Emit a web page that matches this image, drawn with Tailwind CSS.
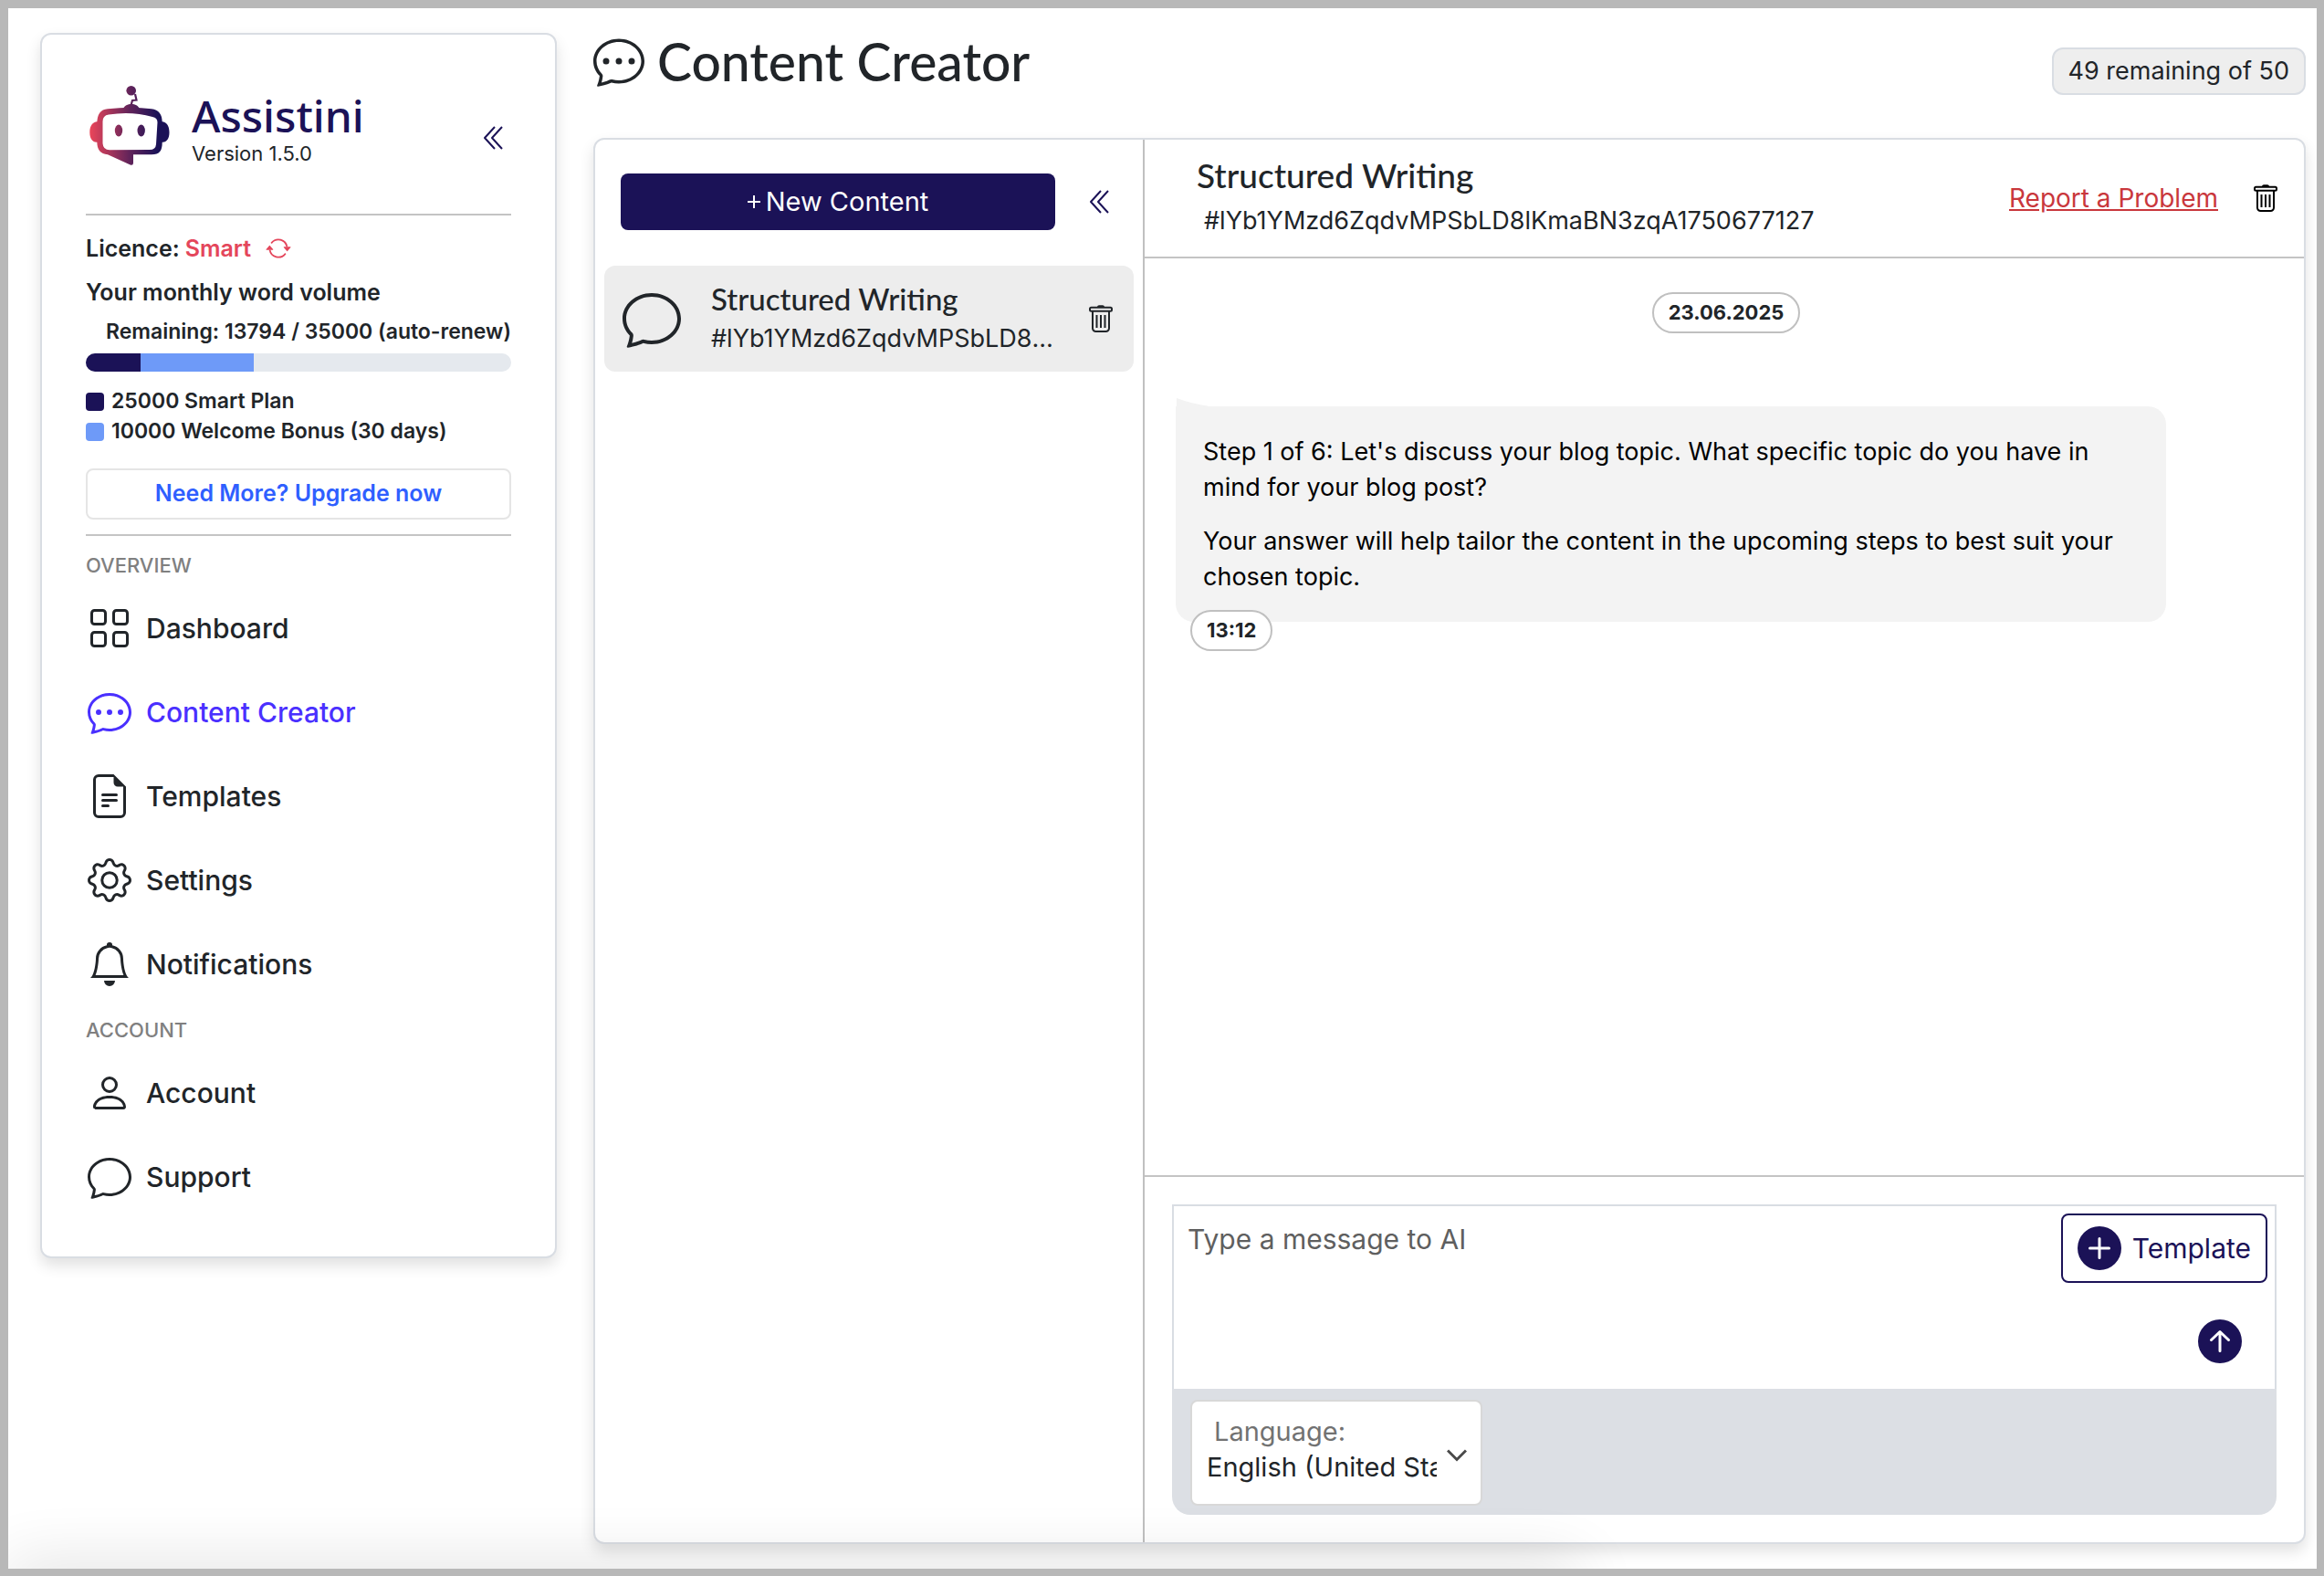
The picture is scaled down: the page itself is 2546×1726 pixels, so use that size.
<!DOCTYPE html>
<html lang="en">
<head>
  <meta charset="UTF-8" />
  <meta name="viewport" content="width=device-width, initial-scale=1.0" />
  <title>Assistini - Content Creator</title>
  <!-- Tailwind CSS CDN -->
  <script src="https://cdn.jsdelivr.net/npm/@tailwindcss/browser@4"></script>
</head>
<body class="relative min-h-screen flex items-stretch overflow-hidden border-t-9 border-l-9 border-r-8 border-b-8 border-[#b8b8b8] bg-white pt-[27px] pr-3 pb-[27px] pl-[35px] gap-10 font-['Inter',sans-serif] text-[#212529]">

  <!-- Shared icons -->
  <svg class="hidden" xmlns="http://www.w3.org/2000/svg">
    <symbol id="i-chat" viewBox="0 0 16 16">
      <path d="M2.678 11.894a1 1 0 0 1 .287.801 11 11 0 0 1-.398 2c1.395-.323 2.247-.697 2.634-.893a1 1 0 0 1 .71-.074A8 8 0 0 0 8 14c3.996 0 7-2.807 7-6s-3.004-6-7-6-7 2.808-7 6c0 1.468.617 2.83 1.678 3.894m-.493 3.905a22 22 0 0 1-.713.129c-.2.032-.352-.176-.273-.362a10 10 0 0 0 .244-.637l.003-.01c.248-.72.45-1.548.524-2.319C.743 11.37 0 9.76 0 8c0-3.866 3.582-7 8-7s8 3.134 8 7-3.582 7-8 7a9 9 0 0 1-2.347-.306c-.52.263-1.639.742-3.468 1.105" />
    </symbol>
    <symbol id="i-chat-dots" viewBox="0 0 16 16">
      <use href="#i-chat" />
      <path d="M5 8a1 1 0 1 1-2 0 1 1 0 0 1 2 0m4 0a1 1 0 1 1-2 0 1 1 0 0 1 2 0m3 1a1 1 0 1 0 0-2 1 1 0 0 0 0 2" />
    </symbol>
    <symbol id="i-collapse" viewBox="0 0 22 26">
      <path d="M13 1 2 13l11 12M21 1 10 13l11 12" fill="none" stroke="currentColor" stroke-width="2" stroke-linejoin="round" />
    </symbol>
    <symbol id="i-trash" viewBox="0 0 26 30">
      <path d="M9 2.5C9 1 10 .3 11 .3h4c1 0 2 .7 2 2.2z" />
      <rect x="1" y="2.8" width="24" height="4" rx="1.5" fill="none" stroke="currentColor" stroke-width="2" />
      <path d="M4 7v18.500a3.500 3.500 0 0 0 3.500 3.500h11a3.500 3.500 0 0 0 3.500-3.500V7M8.500 11v14M13 11v14M17.500 11v14" fill="none" stroke="currentColor" stroke-width="2" />
    </symbol>
  </svg>

  <!-- Sidebar -->
  <aside class="relative z-10 w-[566px] shrink-0 self-start rounded-xl border-2 border-[#d9dde3] bg-white px-12 pb-[41px] shadow-[0_8px_16px_rgba(0,0,0,0.12)]">
    <div class="flex items-end pt-14 pb-[52px] pl-1 pr-[9px]">
      <svg class="size-[88px] shrink-0" viewBox="0 0 88 88">
        <defs>
          <linearGradient id="robot" gradientUnits="userSpaceOnUse" x1="0" y1="0" x2="88" y2="0">
            <stop offset="0" stop-color="#ec465a" />
            <stop offset="0.5" stop-color="#61235a" />
            <stop offset="0.85" stop-color="#1b1257" />
            <stop offset="1" stop-color="#1b1257" />
          </linearGradient>
        </defs>
        <g fill="url(#robot)">
          <circle cx="45.700" cy="5.300" r="5.300" />
          <path d="M50 9 51.500 15.500 47 16 45.500 21.500" fill="none" stroke="url(#robot)" stroke-width="2.200" />
          <path d="M37 25.500C38 21.500 42 20 46 20s7.500 1.500 9 5.500z" />
          <path d="M10 39C4 39 .3 43 .3 51S4 62 10 62zM78 39c6 0 9.500 4 9.500 12S84 62 78 62z" />
          <path fill-rule="evenodd" d="M8.300 42C8.300 31 12 26 20 25.300Q46 22 68 25.300C76 26.500 79.700 31 79.700 40V62C79.700 71 77 75.300 68 75.300H48V84.500Q48 87.500 44.700 86.500L20 75.300C12 74.500 8.300 70 8.300 61zM14.500 39V63Q15 70.300 22 70.300L66 70Q72.500 70 73 64L74.500 40Q74.500 35 69 34Q46 27.500 21 31.500Q14.500 32.500 14.500 39" />
          <ellipse cx="32" cy="49" rx="4.200" ry="6.500" />
          <ellipse cx="56.700" cy="49" rx="4.200" ry="6.500" />
        </g>
      </svg>
      <div class="ml-6 flex-1">
        <div class="font-['Noto_Sans',sans-serif] text-[48px] leading-[56px] font-medium text-[#1b1257]">Assistini</div>
        <div class="text-[22px] leading-[27px]">Version 1.5.0</div>
      </div>
      <button type="button" aria-label="Collapse sidebar" class="mb-[18px] text-[#1b1257]">
        <svg class="h-[26px] w-[22px]"><use href="#i-collapse" /></svg>
      </button>
    </div>

    <div class="border-t-2 border-[#c4c4c4] pt-3">
      <div class="flex items-center text-[25px] leading-[48px] font-semibold">
        Licence:<span class="ml-[6px] text-[#e4465b]">Smart</span>
        <button type="button" aria-label="Refresh licence" class="ml-4 text-[#e4465b]">
          <svg class="size-7" viewBox="0 0 16 16" fill="currentColor">
            <path d="M11.534 7h3.932a.25.25 0 0 1 .192.41l-1.966 2.36a.25.25 0 0 1-.384 0l-1.966-2.36a.25.25 0 0 1 .192-.41m-11 2h3.932a.25.25 0 0 0 .192-.41L2.692 6.230a.25.25 0 0 0-.384 0L.342 8.590A.25.25 0 0 0 .534 9" />
            <path d="M8 3c-1.552 0-2.940.707-3.857 1.818a.5.5 0 1 1-.771-.636A6.002 6.002 0 0 1 13.917 7H12.900A5 5 0 0 0 8 3M3.100 9a5.002 5.002 0 0 0 8.757 2.182.5.5 0 1 1 .771.636A6.002 6.002 0 0 1 2.083 9z" />
          </svg>
        </button>
      </div>
      <div class="text-[25px] leading-[48px] font-semibold">Your monthly word volume</div>
      <div class="text-right text-[23px] leading-[38px] font-semibold whitespace-nowrap">Remaining: 13794 / 35000 (auto-renew)</div>
      <div class="mt-[5px] flex h-5 overflow-hidden rounded-full bg-[#e5e9ee]">
        <div class="bg-[#1b1257]" style="width: 12.9%"></div>
        <div class="bg-[#6e9af8]" style="width: 26.6%"></div>
      </div>
      <ul class="mt-4 text-[23px] leading-[33px] font-semibold">
        <li class="flex items-center gap-2"><span class="size-5 rounded-sm bg-[#1b1257]"></span>25000 Smart Plan</li>
        <li class="flex items-center gap-2"><span class="size-5 rounded-sm bg-[#6e9af8]"></span>10000 Welcome Bonus (30 days)</li>
      </ul>
      <button type="button" class="mt-6 h-14 w-full rounded-lg border-2 border-[#e5e5e5] text-[25px] font-semibold text-[#2f5fff]">Need More? Upgrade now</button>
    </div>

    <nav class="mt-4 border-t-2 border-[#c4c4c4] text-[30px] font-medium">
      <h2 class="mt-4 mb-[7px] text-[22px] leading-8 text-[#808080]">OVERVIEW</h2>
      <a href="#" class="flex h-[92px] items-center gap-4 pl-[2px]">
        <svg class="size-12" viewBox="0 0 16 16" fill="none" stroke="currentColor">
          <rect x="1.500" y="1.500" width="5" height="5" rx="1" />
          <rect x="9.500" y="1.500" width="5" height="5" rx="1" />
          <rect x="1.500" y="9.500" width="5" height="5" rx="1" />
          <rect x="9.500" y="9.500" width="5" height="5" rx="1" />
        </svg>
        Dashboard
      </a>
      <a href="#" class="flex h-[92px] items-center gap-4 pl-[2px] text-[#4a30ff]">
        <svg class="size-12" fill="currentColor"><use href="#i-chat-dots" /></svg>
        Content Creator
      </a>
      <a href="#" class="flex h-[92px] items-center gap-4 pl-[2px]">
        <svg class="size-12" viewBox="0 0 16 16" fill="currentColor">
          <path d="M5.500 7a.5.5 0 0 0 0 1h5a.5.5 0 0 0 0-1zM5 9.500a.5.5 0 0 1 .5-.5h5a.5.5 0 0 1 0 1h-5a.5.5 0 0 1-.5-.5m0 2a.5.5 0 0 1 .5-.5h2a.5.5 0 0 1 0 1h-2a.5.5 0 0 1-.5-.5" />
          <path d="M9.500 0H4a2 2 0 0 0-2 2v12a2 2 0 0 0 2 2h8a2 2 0 0 0 2-2V4.500zm0 1v2A1.500 1.500 0 0 0 11 4.500h2V14a1 1 0 0 1-1 1H4a1 1 0 0 1-1-1V2a1 1 0 0 1 1-1z" />
        </svg>
        Templates
      </a>
      <a href="#" class="flex h-[92px] items-center gap-4 pl-[2px]">
        <svg class="size-12" viewBox="0 0 16 16" fill="currentColor">
          <path d="M8 4.754a3.246 3.246 0 1 0 0 6.492 3.246 3.246 0 0 0 0-6.492M5.754 8a2.246 2.246 0 1 1 4.492 0 2.246 2.246 0 0 1-4.492 0" />
          <path d="M9.796 1.343c-.527-1.790-3.065-1.790-3.592 0l-.094.319a.873.873 0 0 1-1.255.520l-.292-.160c-1.640-.892-3.433.902-2.540 2.541l.159.292a.873.873 0 0 1-.520 1.255l-.319.094c-1.790.527-1.790 3.065 0 3.592l.319.094a.873.873 0 0 1 .520 1.255l-.160.292c-.892 1.640.901 3.434 2.541 2.540l.292-.159a.873.873 0 0 1 1.255.520l.094.319c.527 1.790 3.065 1.790 3.592 0l.094-.319a.873.873 0 0 1 1.255-.520l.292.160c1.640.893 3.434-.902 2.540-2.541l-.159-.292a.873.873 0 0 1 .520-1.255l.319-.094c1.790-.527 1.790-3.065 0-3.592l-.319-.094a.873.873 0 0 1-.520-1.255l.160-.292c.893-1.640-.902-3.433-2.541-2.540l-.292.159a.873.873 0 0 1-1.255-.520zm-2.633.283c.246-.835 1.428-.835 1.674 0l.094.319a1.873 1.873 0 0 0 2.693 1.115l.291-.160c.764-.415 1.600.420 1.184 1.185l-.159.292a1.873 1.873 0 0 0 1.116 2.692l.318.094c.835.246.835 1.428 0 1.674l-.319.094a1.873 1.873 0 0 0-1.115 2.693l.160.291c.415.764-.420 1.600-1.185 1.184l-.291-.159a1.873 1.873 0 0 0-2.693 1.116l-.094.318c-.246.835-1.428.835-1.674 0l-.094-.319a1.873 1.873 0 0 0-2.692-1.115l-.292.160c-.764.415-1.600-.420-1.184-1.185l.159-.291A1.873 1.873 0 0 0 1.945 8.930l-.319-.094c-.835-.246-.835-1.428 0-1.674l.319-.094A1.873 1.873 0 0 0 3.060 4.377l-.160-.292c-.415-.764.420-1.600 1.185-1.184l.292.159a1.873 1.873 0 0 0 2.692-1.115z" />
        </svg>
        Settings
      </a>
      <a href="#" class="flex h-[92px] items-center gap-4 pl-[2px]">
        <svg class="size-12" viewBox="0 0 16 16" fill="currentColor">
          <path d="M8 16a2 2 0 0 0 2-2H6a2 2 0 0 0 2 2M8 1.918l-.797.161A4 4 0 0 0 4 6c0 .628-.134 2.197-.459 3.742-.160.767-.376 1.566-.663 2.258h10.244c-.287-.692-.502-1.490-.663-2.258C12.134 8.197 12 6.628 12 6a4 4 0 0 0-3.203-3.920zM14.220 12c.223.447.481.801.780 1H1c.299-.199.557-.553.780-1C2.680 10.200 3 6.880 3 6c0-2.420 1.720-4.440 4.005-4.901a1 1 0 1 1 1.990 0A5 5 0 0 1 13 6c0 .880.320 4.200 1.220 6" />
        </svg>
        Notifications
      </a>
      <h2 class="mt-[10px] mb-[7px] text-[22px] leading-8 text-[#808080]">ACCOUNT</h2>
      <a href="#" class="flex h-[92px] items-center gap-4 pl-[2px]">
        <svg class="size-12" viewBox="0 0 16 16" fill="currentColor">
          <path d="M8 8a3 3 0 1 0 0-6 3 3 0 0 0 0 6m2-3a2 2 0 1 1-4 0 2 2 0 0 1 4 0m4 8c0 1-1 1-1 1H3s-1 0-1-1 1-4 6-4 6 3 6 4m-1-.004c-.001-.246-.154-.986-.832-1.664C11.516 10.680 10.289 10 8 10s-3.516.680-4.168 1.332c-.678.678-.830 1.418-.832 1.664z" />
        </svg>
        Account
      </a>
      <a href="#" class="flex h-[92px] items-center gap-4 pl-[2px]">
        <svg class="size-12" fill="currentColor"><use href="#i-chat" /></svg>
        Support
      </a>
    </nav>
  </aside>

  <!-- Main area -->
  <main class="relative z-10 flex min-w-0 flex-1 flex-col">
    <header class="flex h-[115px] items-start justify-between pt-[3px]">
      <h1 class="flex items-center gap-[14px] font-['Lato',sans-serif] text-[57px] leading-14 font-medium">
        <svg class="size-14" fill="currentColor"><use href="#i-chat-dots" /></svg>
        Content Creator
      </h1>
      <div class="mt-[13px] flex h-[52px] items-center rounded-xl border-2 border-[#d9dde3] bg-[#eeeeee] px-4 text-[27px]">49 remaining of 50</div>
    </header>

    <div class="flex flex-1 rounded-xl border-2 border-[#d9dde3] bg-white shadow-[0_8px_16px_rgba(0,0,0,0.12)]">
      <!-- Conversation list -->
      <section class="w-[602px] shrink-0 border-r-2 border-[#c0c0c0]">
        <div class="flex items-center gap-[37px] pt-[37px] pr-[37px] pl-7">
          <button type="button" class="flex h-[62px] flex-1 items-center justify-center gap-[6px] rounded-lg bg-[#1b1257] text-[29px] text-white">
            <svg class="size-[14px]" viewBox="0 0 14 14" stroke="currentColor" stroke-width="2"><path d="M7 0v14M0 7h14" /></svg>
            New Content
          </button>
          <button type="button" aria-label="Collapse list" class="text-[#1b1257]">
            <svg class="h-[26px] w-[22px]"><use href="#i-collapse" /></svg>
          </button>
        </div>
        <div class="mx-[10px] mt-[39px] flex h-[116px] items-center rounded-xl bg-[#ededed] pr-[23px] pl-5">
          <svg class="size-16 shrink-0" fill="currentColor"><use href="#i-chat" /></svg>
          <div class="mr-[37px] ml-[33px] min-w-0 flex-1 leading-[44px]">
            <div class="font-['Lato',sans-serif] text-[33px] font-medium">Structured Writing</div>
            <div class="truncate text-[27px]">#lYb1YMzd6ZqdvMPSbLD8lKmaBN3zqA1750677127</div>
          </div>
          <button type="button" aria-label="Delete conversation">
            <svg class="h-[30px] w-[26px]" fill="currentColor"><use href="#i-trash" /></svg>
          </button>
        </div>
      </section>

      <!-- Conversation -->
      <section class="flex min-w-0 flex-1 flex-col">
        <div class="flex h-[130px] items-center border-b-2 border-[#c4c4c4] pr-[29px] pl-[57px]">
          <div class="min-w-0 flex-1 leading-[50px]">
            <h2 class="font-['Lato',sans-serif] text-[37px] font-medium">Structured Writing</h2>
            <div class="pl-2 text-[27px]">#lYb1YMzd6ZqdvMPSbLD8lKmaBN3zqA1750677127</div>
          </div>
          <a href="#" class="text-[28px] text-[#c9373c] underline">Report a Problem</a>
          <button type="button" aria-label="Delete conversation" class="ml-[39px] text-black">
            <svg class="h-[30px] w-[26px]" fill="currentColor"><use href="#i-trash" /></svg>
          </button>
        </div>

        <div class="flex flex-1 flex-col items-start pt-[37px] pr-[30px] pl-[34px]">
          <div class="flex h-[45px] items-center self-center rounded-full border-2 border-[#c0c0c0] px-4 text-[22px] font-bold">23.06.2025</div>
          <div class="relative mt-20 w-[90%] rounded-[20px] rounded-tl-none bg-[#f3f3f3] p-[30px] text-[27px] leading-[39px] text-black">
            <svg class="absolute -top-[9px] left-[1px] h-[9px] w-9" viewBox="0 0 36 9"><path d="M0 0Q16 6 36 9H0z" fill="#f3f3f3" /></svg>
            <p>Step 1 of 6: Let's discuss your blog topic. What specific topic do you have in mind for your blog post?</p>
            <p class="mt-5">Your answer will help tailor the content in the upcoming steps to best suit your chosen topic.</p>
          </div>
          <div class="relative -mt-[13px] ml-4 flex h-[45px] items-center rounded-full border-2 border-[#c0c0c0] bg-white px-4 text-[22px] font-bold">13:12</div>
        </div>

        <!-- Message form -->
        <form class="border-t-2 border-[#c4c4c4] p-[30px]">
          <div class="relative">
            <textarea aria-label="Message" placeholder="Type a message to AI" class="block h-[202px] w-full resize-none border-2 border-b-0 border-[#d9dde3] bg-white px-[15px] pt-[15px] text-[30px] leading-[42px] placeholder:text-[#5f5f5f]"></textarea>
            <button type="button" class="absolute top-[10px] right-[10px] flex h-[76px] items-center gap-3 rounded-lg border-2 border-[#1b1257] bg-white px-4 text-[30px] text-[#1b1257]">
              <svg class="size-12" viewBox="0 0 48 48">
                <circle cx="24" cy="24" r="24" fill="#1b1257" />
                <path d="M24 13.500v21M13.500 24h21" stroke="white" stroke-width="3" stroke-linecap="round" />
              </svg>
              Template
            </button>
            <button type="submit" aria-label="Send message" class="absolute right-[38px] bottom-7">
              <svg class="size-12" viewBox="0 0 48 48">
                <circle cx="24" cy="24" r="24" fill="#1b1257" />
                <path d="M24 34.500V14M14.500 22.500 24 13.500l9.500 9" fill="none" stroke="white" stroke-width="3" stroke-linecap="round" stroke-linejoin="round" />
              </svg>
            </button>
          </div>
          <div class="rounded-b-[20px] bg-[#dcdfe4] pt-3 pb-[10px] pl-5">
            <div class="relative h-[116px] w-80 rounded-lg border-2 border-[#d8d8d8] bg-white pt-[13px]">
              <label for="language" class="block pl-6 text-[29px] leading-10 text-[#727272]">Language:</label>
              <select id="language" class="block h-[38px] w-full appearance-none bg-transparent pr-12 pl-4 text-[29px] leading-[38px]">
                <option>English (United States)</option>
                <option>English (United Kingdom)</option>
                <option>Deutsch</option>
              </select>
              <svg class="pointer-events-none absolute top-[52px] right-[15px] h-[14px] w-[22px]" viewBox="0 0 22 14" fill="none" stroke="#4a4a4a" stroke-width="3"><path d="M1 1.500 11 11.500 21 1.500" /></svg>
            </div>
          </div>
        </form>
      </section>
    </div>
  </main>

  <!-- Soft shade along the bottom edge -->
  <div class="pointer-events-none absolute top-full left-0 z-20 h-10 w-[68%] shadow-[0_0_70px_rgba(0,0,0,0.16)]"></div>
</body>
</html>
